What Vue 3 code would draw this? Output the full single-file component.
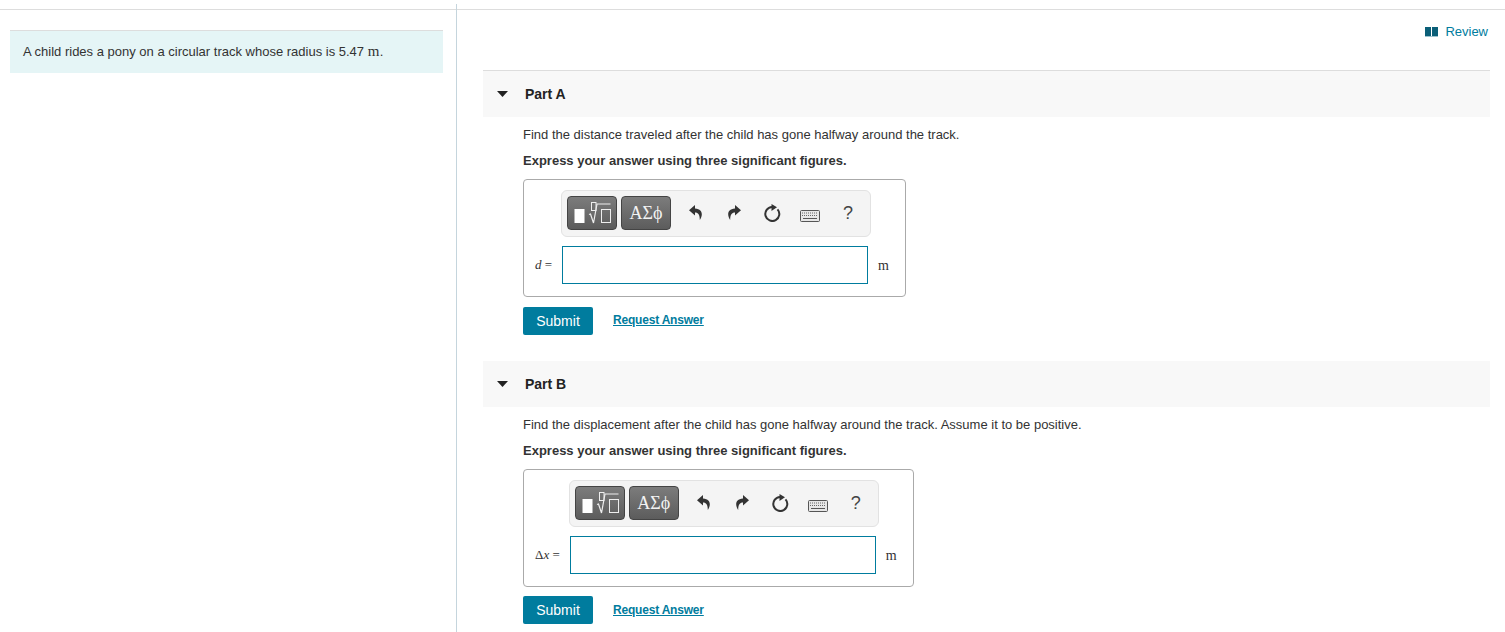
<script setup>
const parts = [
  { name: 'Part A', question: 'Find the distance traveled after the child has gone halfway around the track.', variable: 'd' },
  { name: 'Part B', question: 'Find the displacement after the child has gone halfway around the track. Assume it to be positive.', variable: 'Δx' },
]
</script>

<template>
  <div class="page">
    <div class="columns">
      <aside class="left">
        <div class="problem">A child rides a pony on a circular track whose radius is 5.47 <span class="unit-inline">m</span>.</div>
      </aside>
      <main class="right">
        <div class="review-row">
          <a class="review">
            <svg width="13" height="10" viewBox="0 0 13 10" class="book"><path d="M0 0h6v9.200H0zM7 0h6v9.200H7z" fill="#0b5f78"/><path d="M0 9.500h13" stroke="#9cc3cf"/></svg>
            Review
          </a>
        </div>
        <section v-for="(p, i) in parts" :key="p.name" class="part" :class="{ first: i === 0 }">
          <header class="part-head">
            <svg class="caret" width="11" height="6" viewBox="0 0 11 6"><path d="M0 0h11L5.500 6z" fill="#222"/></svg>
            <span class="part-title">{{ p.name }}</span>
          </header>
          <div class="part-body">
            <p class="question">{{ p.question }}</p>
            <p class="instruction">Express your answer using three significant figures.</p>
            <div class="answer-box">
              <div class="toolbar">
                <button class="tool-btn templates">
                  <svg width="50" height="34" viewBox="0 0 50 34">
                    <rect x="7.500" y="13" width="10" height="14" fill="#fff"/>
                    <rect x="24.500" y="6.500" width="4.500" height="8" fill="none" stroke="#eee"/>
                    <path d="M22 18.500l1.500-.5 3 9 3.500-19h13.500" fill="none" stroke="#eee" stroke-width="1.200"/>
                    <rect x="34.500" y="13.500" width="9" height="13" fill="none" stroke="#eee"/>
                  </svg>
                </button>
                <button class="tool-btn greek">ΑΣϕ</button>
                <span class="icons">
                  <svg width="14" height="15" viewBox="0 0 14 15"><path d="M6 0L0 5.300 6 10.500V7.500c3.200 0 4.800 2 4.800 7.500 2.700-3.500 4-10.800-4.800-11.500z" fill="#333"/></svg>
                  <svg width="14" height="15" viewBox="0 0 14 15"><path d="M8 0l6 5.300L8 10.500V7.500c-3.200 0-4.800 2-4.800 7.500C.5 11.500-.8 4.200 8 3.500z" fill="#333"/></svg>
                  <svg width="17" height="18" viewBox="0 0 17 18"><path d="M8 3A7 7 0 1 0 13.500 5.300" fill="none" stroke="#333" stroke-width="2"/><path d="M7.500 0v7L13 3.300z" fill="#333"/></svg>
                  <svg width="20" height="12" viewBox="0 0 20 12"><rect x=".5" y=".5" width="19" height="11" rx="1" fill="#e6e6e6" stroke="#555"/><path d="M2 3h16M2 5.500h16" stroke="#666" stroke-dasharray="1 1"/><path d="M3 8.500h14" stroke="#555"/></svg>
                  <span class="help">?</span>
                </span>
              </div>
              <div class="label">
                <template v-if="p.variable === 'd'"><i>d</i></template>
                <template v-else>Δ<i>x</i></template>
                =
              </div>
              <div class="input"></div>
              <div class="unit">m</div>
            </div>
            <div class="actions">
              <button class="submit">Submit</button>
              <a class="request">Request Answer</a>
            </div>
          </div>
        </section>
      </main>
    </div>
  </div>
</template>

<style>
html, body { margin: 0; background: #fff; }
</style>

<style scoped>
.page {
  height: 632px;
  overflow: hidden;
  font-family: "Liberation Sans", Arial, sans-serif;
  font-size: 13px;
  color: #333;
  box-sizing: border-box;
  position: relative;
}
.columns {
  display: flex;
  height: 623px;
  margin-top: 9px;
  border-top: 1px solid #ddd;
}
.left {
  width: 457px;
  box-sizing: border-box;
  padding: 20px 13px 0 10px;
  border-right: 1px solid #c5d5dd;
  flex: none;
  position: relative;
}
.left::after {
  content: "";
  position: absolute;
  right: -1px;
  top: -6px;
  width: 1px;
  height: 6px;
  background: #c5d5dd;
}
.problem {
  height: 42px;
  line-height: 41px;
  padding-left: 13px;
  background: #e5f5f6;
  border-top: 1px solid #ddd;
}
.unit-inline { font-family: "Liberation Serif", serif; font-size: 15px; letter-spacing: 0.5px; line-height: 1; }
.right {
  flex: 1;
  min-width: 0;
  padding: 0 15px 0 26px;
}
.review-row {
  display: flex;
  justify-content: flex-end;
  height: 60px;
  padding-top: 13px;
  box-sizing: border-box;
}
.review { color: #007c9e; display: flex; align-items: center; gap: 7px; height: 17px; padding-right: 2px; }
.book { flex: none; }
.part-head {
  display: flex;
  align-items: center;
  height: 46px;
  background: #f8f8f8;
  font-weight: 700;
  font-size: 14px;
  color: #222;
}
.part-title { margin-top: -1px; }
.first .part-head { border-top: 1px solid #ddd; }
.caret { margin-left: 14px; margin-right: 17px; }
.part-body { padding: 0 0 26px 40px; }
.question { margin: 0; padding-top: 9px; line-height: 17px; }
.instruction { margin: 9px 0 0; line-height: 17px; font-weight: 700; }
.answer-box {
  display: grid;
  width: fit-content;
  grid-template-columns: auto 306px auto;
  grid-template-rows: 47px 38px;
  row-gap: 9px;
  align-items: center;
  border: 1px solid #aaa;
  border-radius: 4px;
  margin-top: 10px;
  padding: 10px 0 12px 11px;
}
.toolbar {
  grid-column: 2;
  grid-row: 1;
  width: 310px;
  height: 47px;
  margin-left: -1px;
  box-sizing: border-box;
  background: #f4f4f4;
  border: 1px solid #e2e2e2;
  border-radius: 6px;
  display: flex;
  align-items: flex-start;
  padding: 5px 0 0 5px;
  gap: 4px;
}
.tool-btn {
  width: 50px;
  height: 34px;
  padding: 0;
  box-sizing: border-box;
  border: 1px solid #444;
  border-radius: 4px;
  background: linear-gradient(#7c7c7c, #5c5c5c);
  color: #f2f2f2;
  display: flex;
  align-items: center;
  justify-content: center;
}
.templates svg { display: block; margin: -1px; }
.greek { font-family: "Liberation Serif", serif; font-size: 18px; }
.icons {
  position: relative;
  flex: 1;
  height: 34px;
}
.icons svg, .help { position: absolute; }
.icons svg:nth-child(1) { left: 14px; top: 9px; }
.icons svg:nth-child(2) { left: 52px; top: 9px; }
.icons svg:nth-child(3) { left: 89px; top: 8px; }
.icons svg:nth-child(4) { left: 125px; top: 14px; }
.help { left: 168px; top: 7px; font-size: 18px; color: #444; }
.label {
  grid-column: 1;
  grid-row: 2;
  font-family: "Liberation Serif", serif;
  font-size: 13px;
  padding-right: 10px;
  white-space: nowrap;
}
.input {
  grid-column: 2;
  grid-row: 2;
  height: 38px;
  box-sizing: border-box;
  border: 1px solid #007c9e;
}
.unit {
  grid-column: 3;
  grid-row: 2;
  font-family: "Liberation Serif", serif;
  font-size: 14px;
  padding: 1px 0 0 10px;
  width: 37px;
  box-sizing: border-box;
  white-space: nowrap;
}
.actions {
  display: flex;
  align-items: center;
  margin-top: 10px;
  gap: 20px;
}
.part:not(.first) .actions { margin-top: 9px; }
.submit {
  width: 70px;
  height: 28px;
  border: 0;
  border-radius: 2px;
  background: #007c9e;
  color: #fff;
  font: 14px "Liberation Sans", Arial, sans-serif;
  padding: 0;
}
.request {
  color: #007c9e;
  font-weight: 700;
  font-size: 12px;
  letter-spacing: -0.2px;
  text-decoration: underline;
  margin-bottom: 2px;
}
.part:not(.first) .request { margin-bottom: 0; }
</style>
